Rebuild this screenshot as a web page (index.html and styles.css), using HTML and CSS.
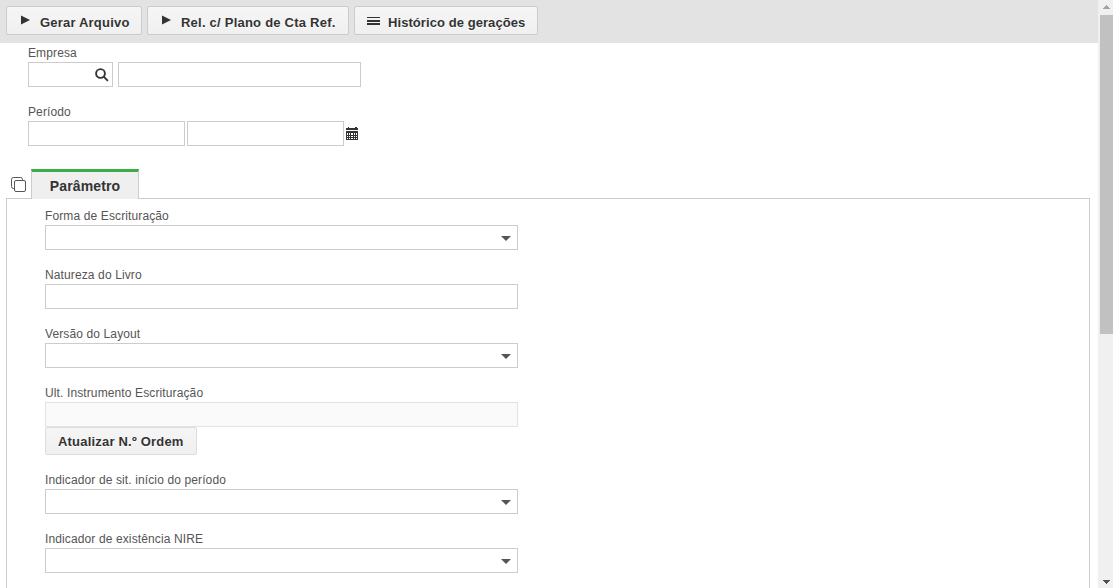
FILE: index.html
```html
<!DOCTYPE html>
<html lang="pt-BR">

<head>
    <meta charset="UTF-8">
    <title>Gerar Arquivo</title>
    <link rel="stylesheet" href="styles.css">
</head>

<body>

    <div class="page">
        <div class="content">
            <div class="toolbar">
                <button class="btn btn-gerar">
                    <svg class="icon-play" width="9" height="10" viewBox="0 0 9 10"><path d="M0 0.5 L9 5 L0 9.5z" /></svg>
                    <span>Gerar Arquivo</span>
                </button>
                <button class="btn btn-rel">
                    <svg class="icon-play" width="9" height="10" viewBox="0 0 9 10"><path d="M0 0.5 L9 5 L0 9.5z" /></svg>
                    <span>Rel. c/ Plano de Cta Ref.</span>
                </button>
                <button class="btn btn-hist">
                    <svg class="icon-list" width="13" height="8" viewBox="0 0 13 8" shape-rendering="crispEdges"><path d="M0 0h13v1H0zM0 3h13v2H0zM0 6h13v2H0z" /></svg>
                    <span>Histórico de gerações</span>
                </button>
            </div>

            <div class="filters">
                <div class="field">
                    <label>Empresa</label>
                    <div class="row">
                        <div class="input input-code">
                            <svg width="14" height="14" viewBox="0 0 14 14"><circle cx="5.5" cy="5.5" r="4.4" /><path d="M8.7 8.7l4.2 4.2" /></svg>
                        </div>
                        <div class="input input-name"></div>
                    </div>
                </div>
                <div class="field">
                    <label>Período</label>
                    <div class="row row-period">
                        <div class="input input-date"></div>
                        <div class="input input-date"></div>
                        <svg class="icon-calendar" width="12" height="13" viewBox="0 0 12 13" shape-rendering="crispEdges">
                            <path class="dark" d="M2 0h1v1h6V0h2v1h1v2H0V1h2zM0 4h12v9H0z" />
                            <path class="light" d="M1 6h1v2H1zM3 6h1v2H3zM5 6h2v2H5zM8 6h1v2H8zM10 6h1v2h-1zM1 9h1v1H1zM3 9h1v1H3zM5 9h2v1H5zM8 9h1v1H8zM10 9h1v1h-1zM1 11h1v1H1zM3 11h1v1H3zM5 11h2v1H5zM8 11h1v1H8zM10 11h1v1h-1z" />
                        </svg>
                    </div>
                </div>
            </div>

            <div class="tabs">
                <svg class="icon-copy" width="16" height="16" viewBox="0 0 16 16">
                    <path d="M3.5 11.5h-1a2 2 0 0 1-2-2v-7a2 2 0 0 1 2-2h7a2 2 0 0 1 2 2v1" />
                    <rect x="3.5" y="3.5" width="11" height="11" rx="1.5" />
                </svg>
                <div class="tab">Parâmetro</div>
            </div>

            <div class="panel">
                <div class="field">
                    <label>Forma de Escrituração</label>
                    <div class="input select"></div>
                </div>
                <div class="field">
                    <label>Natureza do Livro</label>
                    <div class="input"></div>
                </div>
                <div class="field">
                    <label>Versão do Layout</label>
                    <div class="input select"></div>
                </div>
                <div class="field">
                    <label>Ult. Instrumento Escrituração</label>
                    <div class="input disabled"></div>
                    <button class="btn btn-ordem">Atualizar N.º Ordem</button>
                </div>
                <div class="field">
                    <label>Indicador de sit. início do período</label>
                    <div class="input select"></div>
                </div>
                <div class="field">
                    <label>Indicador de existência NIRE</label>
                    <div class="input select"></div>
                </div>
            </div>
        </div>

        <div class="scrollbar">
            <svg class="arrow-up" width="7" height="4" viewBox="0 0 7 4" shape-rendering="crispEdges"><path d="M3 0h1v1h1v1h1v1h1v1H0V3h1V2h1V1h1z" /></svg>
            <div class="thumb"></div>
            <svg class="arrow-down" width="7" height="4" viewBox="0 0 7 4" shape-rendering="crispEdges"><path d="M0 0h7v1H6v1H5v1H4v1H3V3H2V2H1V1H0z" /></svg>
        </div>
    </div>

</body>

</html>
```
FILE: styles.css
```css
html,
body {
    margin: 0;
    height: 100%;
    overflow: hidden;
}

body {
    background: #fff;
    color: #555;
    font-family: "Liberation Sans", Arial, sans-serif;
    font-size: 12px;
    letter-spacing: 0.12px;
}

.page {
    display: flex;
    height: 100vh;
}

.content {
    flex: 1;
    display: flex;
    flex-direction: column;
    overflow: hidden;
}

.toolbar {
    display: flex;
    flex: none;
    gap: 5px;
    box-sizing: border-box;
    height: 43px;
    padding: 6px;
    background: #e3e3e3;
}

.btn {
    display: flex;
    align-items: center;
    box-sizing: border-box;
    height: 29px;
    padding: 3px 0 0 14px;
    border: 1px solid #ccc;
    border-radius: 2px;
    background: linear-gradient(#f5f5f5, #f0f0f0);
    color: #333;
    font-family: inherit;
    font-size: 13px;
    font-weight: bold;
    letter-spacing: 0.2px;
    text-shadow: 0 1px 0 #fff;
    white-space: nowrap;
}

.btn svg {
    fill: #333;
    margin-top: -4px;
}

.icon-play {
    margin-right: 10px;
}

.btn .icon-list {
    margin: -3px 8px 0 0;
}

.btn-gerar {
    width: 136px;
}

.btn-rel {
    width: 202px;
    letter-spacing: 0.23px;
}

.btn-hist {
    width: 184px;
    padding-left: 12px;
    letter-spacing: 0.07px;
}

.filters {
    flex: none;
    padding: 1px 0 0 28px;
    height: 125px;
}

.field {
    margin-bottom: 16px;
}

.field label {
    display: block;
    height: 18px;
    line-height: 18px;
}

.row {
    display: flex;
    gap: 5px;
}

.row-period {
    gap: 2px;
    align-items: center;
}

.input {
    box-sizing: border-box;
    height: 25px;
    border: 1px solid #ccc;
    background: #fff;
}

.input-code {
    display: flex;
    align-items: center;
    justify-content: flex-end;
    width: 85px;
    padding-right: 3px;
}

.input-code svg {
    fill: none;
    stroke: #333;
    stroke-width: 1.9;
}

.input-name {
    width: 243px;
}

.input-date {
    width: 157px;
}

.icon-calendar .dark {
    fill: #333;
}

.icon-calendar .light {
    fill: #fff;
}

.tabs {
    display: flex;
    flex: none;
    height: 29px;
    padding-left: 11px;
}

.icon-copy {
    margin: 8px 4px 0 0;
    fill: #fff;
    stroke: #555;
}

.tab {
    position: relative;
    z-index: 1;
    box-sizing: border-box;
    width: 108px;
    height: 30px;
    border: 1px solid #ccc;
    border-top: 3px solid #39ac49;
    border-bottom: 0;
    background: #efefef;
    color: #333;
    font-size: 14px;
    font-weight: bold;
    line-height: 28px;
    text-align: center;
}

.panel {
    flex: 1;
    box-sizing: border-box;
    margin: 0 8px 0 6px;
    padding: 8px 0 0 38px;
    border: 1px solid #ccc;
    border-bottom: 0;
}

.panel .input {
    width: 473px;
}

.select {
    display: flex;
    align-items: center;
    justify-content: flex-end;
    padding: 2px 6px 0 0;
}

.select::after {
    content: "";
    border: 5px solid transparent;
    border-top-color: #555;
    border-bottom: 0;
}

.panel .disabled {
    border-color: #e3e3e3;
    background: #fafafa;
}

.btn-ordem {
    width: 152px;
    height: 28px;
    padding: 0 0 0 12px;
    border-color: #ddd;
}

.scrollbar {
    display: flex;
    flex-direction: column;
    box-sizing: border-box;
    width: 15px;
    padding: 5px 0 4px 2px;
    background: #f0f0f0;
}

.arrow-up {
    margin-left: 3px;
    fill: #a3a3a3;
}

.thumb {
    height: 319px;
    margin-top: 6px;
    background: #c1c1c1;
}

.arrow-down {
    margin: auto 0 0 3px;
    fill: #505050;
}
```
